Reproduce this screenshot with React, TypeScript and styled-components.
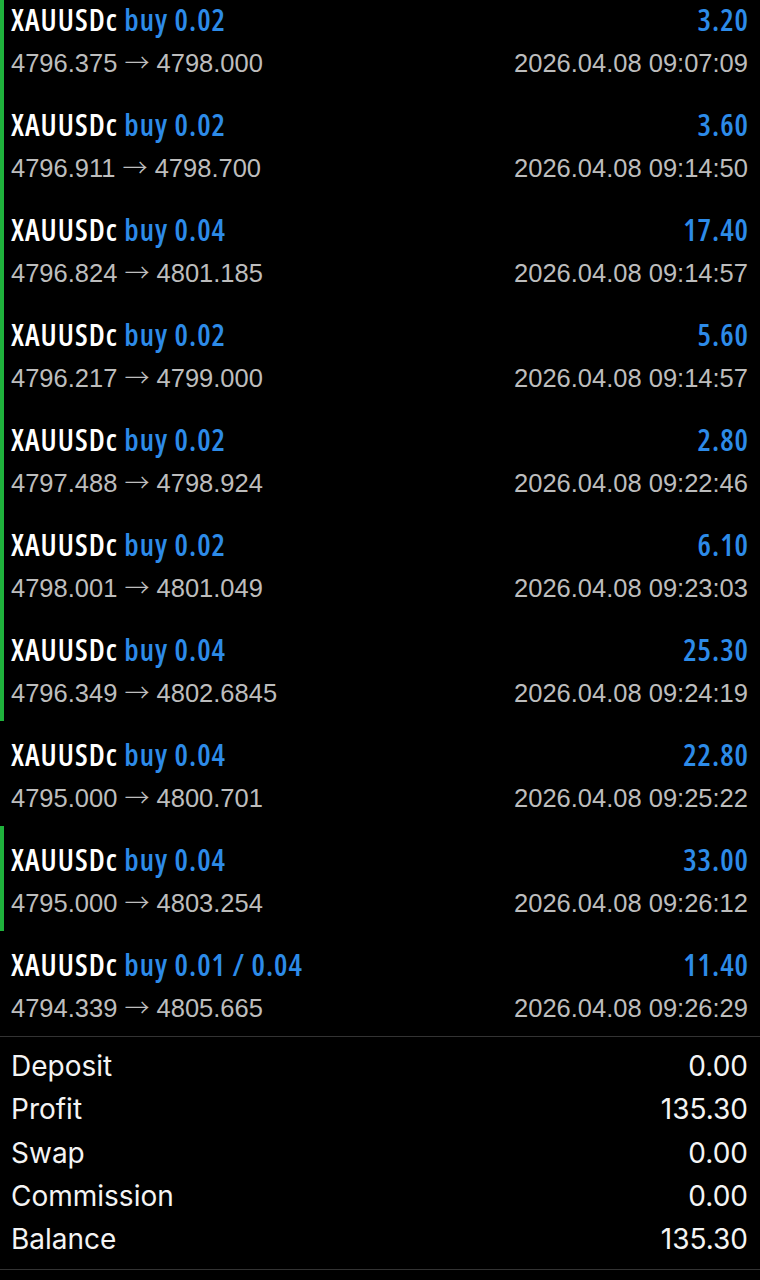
import { FC } from 'react';
import styled, { createGlobalStyle } from 'styled-components';

type Deal = {
  lots: string;
  open: string;
  close: string;
  profit: string;
  time: string;
  marked: boolean;
};

const deals: Deal[] = [
  { lots: '0.02', open: '4796.375', close: '4798.000', profit: '3.20', time: '2026.04.08 09:07:09', marked: true },
  { lots: '0.02', open: '4796.911', close: '4798.700', profit: '3.60', time: '2026.04.08 09:14:50', marked: true },
  { lots: '0.04', open: '4796.824', close: '4801.185', profit: '17.40', time: '2026.04.08 09:14:57', marked: true },
  { lots: '0.02', open: '4796.217', close: '4799.000', profit: '5.60', time: '2026.04.08 09:14:57', marked: true },
  { lots: '0.02', open: '4797.488', close: '4798.924', profit: '2.80', time: '2026.04.08 09:22:46', marked: true },
  { lots: '0.02', open: '4798.001', close: '4801.049', profit: '6.10', time: '2026.04.08 09:23:03', marked: true },
  { lots: '0.04', open: '4796.349', close: '4802.6845', profit: '25.30', time: '2026.04.08 09:24:19', marked: true },
  { lots: '0.04', open: '4795.000', close: '4800.701', profit: '22.80', time: '2026.04.08 09:25:22', marked: false },
  { lots: '0.04', open: '4795.000', close: '4803.254', profit: '33.00', time: '2026.04.08 09:26:12', marked: true },
  { lots: '0.01 / 0.04', open: '4794.339', close: '4805.665', profit: '11.40', time: '2026.04.08 09:26:29', marked: false },
];

const totals = [
  { label: 'Deposit', value: '0.00' },
  { label: 'Profit', value: '135.30' },
  { label: 'Swap', value: '0.00' },
  { label: 'Commission', value: '0.00' },
  { label: 'Balance', value: '135.30' },
];

const App: FC = () => (
  <Screen>
    <GlobalStyle />
    <DealList>
      {deals.map((d, i) => (
        <DealRow key={i} marked={d.marked}>
          <TitleLine>
            <Title>
              XAUUSDc <Side>buy {d.lots}</Side>
            </Title>
            <Profit>{d.profit}</Profit>
          </TitleLine>
          <PriceLine>
            <Muted>
              {d.open} <Arrow>→</Arrow> {d.close}
            </Muted>
            <Muted>{d.time}</Muted>
          </PriceLine>
        </DealRow>
      ))}
    </DealList>
    <Summary>
      {totals.map((t) => (
        <SummaryRow key={t.label}>
          <span>{t.label}</span>
          <span>{t.value}</span>
        </SummaryRow>
      ))}
    </Summary>
  </Screen>
);

const GlobalStyle = createGlobalStyle`
  html, body {
    margin: 0;
    padding: 0;
    background: #000;
  }
`;

const Screen = styled.div`
  width: 760px;
  height: 1280px;
  overflow: hidden;
  background: #000;
`;

// list is scrolled a little: the first row is partly above the top edge
const DealList = styled.div`
  display: flex;
  flex-direction: column;
  margin-top: -14px;
`;

const DealRow = styled.div<{ marked: boolean }>`
  height: 105px;
  box-sizing: border-box;
  padding: 16px 12px 0 7px;
  display: flex;
  flex-direction: column;
  border-left: 4px solid ${({ marked }) => (marked ? '#1fb23c' : 'transparent')};
`;

const TitleLine = styled.div`
  display: flex;
  justify-content: space-between;
  align-items: baseline;
  height: 36px;
  line-height: 36px;
`;

const PriceLine = styled.div`
  display: flex;
  justify-content: space-between;
  align-items: baseline;
  height: 46px;
  line-height: 46px;
`;

const Title = styled.span`
  font-family: 'Open Sans', sans-serif;
  font-stretch: 75%;
  font-weight: 600;
  font-size: 30px;
  letter-spacing: 1px;
  color: #fff;
`;

const Side = styled.span`
  color: #2d8be8;
`;

const Profit = styled(Title)`
  color: #2d8be8;
  margin-right: -1px;
`;

const Muted = styled.span`
  font-family: 'Liberation Sans', Arial, sans-serif;
  font-size: 25.5px;
  color: #bdbdbd;
`;

const Arrow = styled.span`
  font-family: 'Noto Sans CJK SC', 'DejaVu Sans', sans-serif;
  font-weight: 300;
  font-size: 25px;
`;

const Summary = styled.div`
  border-top: 1px solid #333;
  border-bottom: 1px solid #333;
  padding: 8px 12px 7.5px 11px;
  display: flex;
  flex-direction: column;
`;

const SummaryRow = styled.div`
  display: flex;
  justify-content: space-between;
  font-family: Inter, 'Liberation Sans', sans-serif;
  font-size: 28px;
  line-height: 43.3px;
  color: #f4f4f4;
`;

export default App;
